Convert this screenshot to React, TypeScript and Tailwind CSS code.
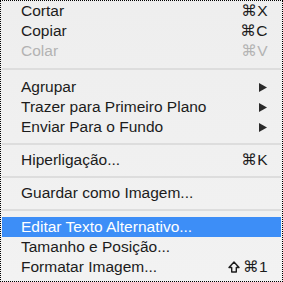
import React from "react";

type Item =
  | { kind: "item"; label: string; shortcut?: string; shift?: boolean; submenu?: boolean; disabled?: boolean; active?: boolean }
  | { kind: "sep"; h: string };

const items: Item[] = [
  { kind: "item", label: "Cortar", shortcut: "⌘X" },
  { kind: "item", label: "Copiar", shortcut: "⌘C" },
  { kind: "item", label: "Colar", shortcut: "⌘V", disabled: true },
  { kind: "sep", h: "h-[16px]" },
  { kind: "item", label: "Agrupar", submenu: true },
  { kind: "item", label: "Trazer para Primeiro Plano", submenu: true },
  { kind: "item", label: "Enviar Para o Fundo", submenu: true },
  { kind: "sep", h: "h-[13px]" },
  { kind: "item", label: "Hiperligação...", shortcut: "⌘K" },
  { kind: "sep", h: "h-[13px]" },
  { kind: "item", label: "Guardar como Imagem..." },
  { kind: "sep", h: "h-[14px]" },
  { kind: "item", label: "Editar Texto Alternativo...", active: true },
  { kind: "item", label: "Tamanho e Posição..." },
  { kind: "item", label: "Formatar Imagem...", shortcut: "⌘1", shift: true },
];

function Arrow() {
  return (
    <svg width="8" height="9" viewBox="0 0 8 9" className="mr-[1px]">
      <polygon points="0,0 8,4.5 0,9" fill="#2a2a2a" />
    </svg>
  );
}

function Shift() {
  return (
    <svg width="12" height="12" viewBox="0 0 12 12" className="mr-[3px]">
      <path d="M6 1 L11 6.5 H8.3 V11 H3.7 V6.5 H1 Z" fill="none" stroke="#1c1c1c" strokeWidth="1.4" strokeLinejoin="round" />
    </svg>
  );
}

export default function App() {
  return (
    <div
      className="w-[283px] h-[282px] border border-dotted border-black bg-gradient-to-b from-[#eeeeee] to-[#f2f2f2] text-[15.5px] text-[#1c1c1c] overflow-hidden"
      style={{ fontFamily: '"Liberation Sans", "DejaVu Sans", sans-serif' }}
    >
      {items.map((it, i) =>
        it.kind === "sep" ? (
          <div key={i} className={`${it.h} flex items-center px-[1px]`}>
            <div className="w-full h-[2px] bg-[#dddddd]" />
          </div>
        ) : (
          <div
            key={i}
            className={`h-[20px] mx-[1px] pl-[19px] pr-[13px] flex items-center justify-between leading-[20px] ${
              it.active ? "bg-[#3d8ef7] text-white" : it.disabled ? "text-[#b3b3b3]" : ""
            }`}
          >
            <span>{it.label}</span>
            {it.shortcut && (
              <span className="flex items-center tracking-[0.5px]">
                {it.shift && <Shift />}
                {it.shortcut}
              </span>
            )}
            {it.submenu && <Arrow />}
          </div>
        )
      )}
    </div>
  );
}
